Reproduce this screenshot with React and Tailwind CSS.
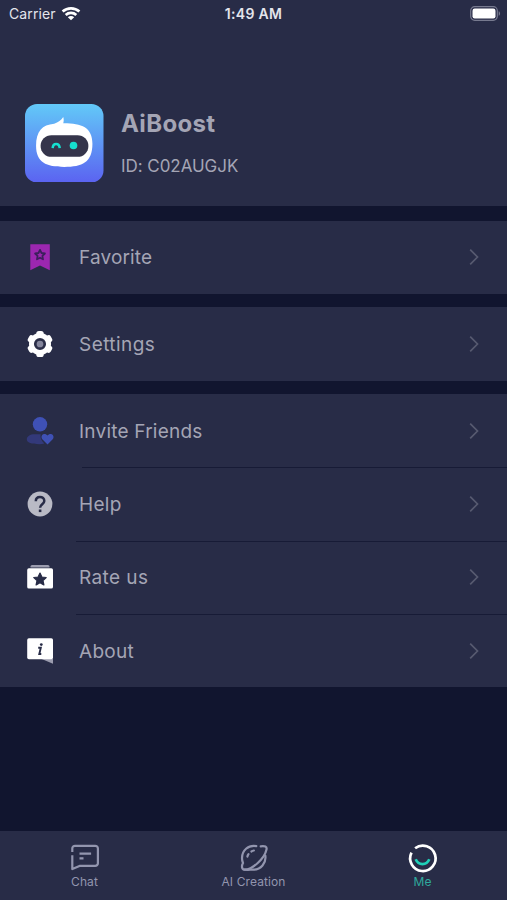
import React, { useState } from 'react';

const BookmarkIcon = () => (
    <svg viewBox="0 0 28 28" className="w-7 h-7">
        <path d="M4.3 1.2h19.5v26L14 22.6l-9.7 4.6z" fill="#9c27b0" />
        <path
            d="M14 6.9l1.5 3.1 3.4.5-2.5 2.4.6 3.4-3-1.6-3 1.6.6-3.4-2.500-2.400 3.400-.5z"
            fill="none"
            stroke="#3c1f5c"
            strokeWidth="1.8"
            strokeLinejoin="round"
        />
    </svg>
);

const GearIcon = () => (
    <svg viewBox="0 0 28 28" className="w-7 h-7">
        <g fill="#fff">
            <circle cx="14" cy="14" r="11" />
            {[0, 60, 120].map((angle) => (
                <rect key={angle} x="10.3" y="0.9" width="7.4" height="26.2" rx="2.6" transform={`rotate(${angle} 14 14)`} />
            ))}
        </g>
        <circle cx="14" cy="14" r="4.7" fill="#85869c" stroke="#2b2e48" strokeWidth="2.7" />
    </svg>
);

const InviteIcon = () => (
    <svg viewBox="0 0 28 28" className="w-7 h-7">
        <circle cx="14" cy="7.3" r="7.2" fill="#3f51b5" />
        <path d="M8.5 17.3h6.200c-.9 3.200.6 6.200 3.600 9.200-1.300.5-3 .7-5 .7C5.500 27.200.8 25.500.8 22.500c0-3.200 3.200-5.200 7.700-5.200z" fill="#33397a" />
        <path d="M21.500 27.500l-5.200-5.300c-1.600-1.900-.8-5.200 2-5.300 1.400 0 2.500.6 3.200 1.700.7-1.100 1.800-1.700 3.200-1.700 2.800.1 3.600 3.400 2 5.300z" fill="#3f51b5" />
    </svg>
);

const HelpIcon = () => (
    <svg viewBox="0 0 28 28" className="w-7 h-7">
        <circle cx="14" cy="14" r="12.4" fill="#b9bac5" />
        <path d="M9.800 11.200c0-2.700 1.800-4.300 4.200-4.300s4.300 1.600 4.300 4c0 3.300-4.200 3.400-4.200 6.800" fill="none" stroke="#282c47" strokeWidth="2.500" />
        <rect x="12.800" y="19.500" width="2.600" height="2.600" fill="#282c47" />
    </svg>
);

const RateIcon = () => (
    <svg viewBox="0 0 28 28" className="w-7 h-7">
        <path d="M4.500 4.500V3.500a1.500 1.500 0 0 1 1.500-1.500h16a1.500 1.500 0 0 1 1.500 1.500v1z" fill="#9c9daf" />
        <rect x="1.200" y="5.300" width="25.800" height="20.300" rx="1.700" fill="#fff" />
        <path
            d="M14 10l1.900 4 4.300.5-3.200 3 .9 4.400-3.900-2.200-3.900 2.200.9-4.400-3.200-3 4.300-.5z"
            fill="#282c47"
            stroke="#282c47"
            strokeWidth="1.200"
            strokeLinejoin="round"
        />
    </svg>
);

const AboutIcon = () => (
    <svg viewBox="0 0 28 28" className="w-7 h-7">
        <path d="M14.500 21.500H27v5.300z" fill="#9c9daf" />
        <rect x="1.200" y="1.300" width="25.800" height="21" rx="1.700" fill="#fff" />
        <circle cx="15.300" cy="7.600" r="1.400" fill="#282c47" />
        <path d="M12.200 10.800h2.600l-1.500 6.200h2" fill="none" stroke="#282c47" strokeWidth="1.900" />
    </svg>
);

const ChevronIcon = () => (
    <svg viewBox="0 0 10 18" className="w-2.5 h-[18px]" fill="none" stroke="#575a70" strokeWidth="1.700">
        <path d="M1.200 1.700L8.500 9l-7.300 7.300" />
    </svg>
);

const ChatIcon = () => (
    <svg viewBox="0 0 30 28" className="w-[30px] h-7" fill="none" stroke="#9295ae" strokeWidth="2.200">
        <path d="M2.300 8V4.500a2.700 2.700 0 0 1 2.700-2.700h20.200a2.700 2.700 0 0 1 2.700 2.700v14.700a2.700 2.700 0 0 1-2.700 2.700H9.500l-7.200 3.200V11.200" strokeLinejoin="round" />
        <path d="M9.500 9.600h11.600M9.500 14.400h4" />
    </svg>
);

const PlanetIcon = () => (
    <svg viewBox="0 0 30 28" className="w-[30px] h-7" fill="none" stroke="#9295ae" strokeWidth="2.200" strokeLinecap="round">
        <path d="M17.300 2.100C9 .8 3 6.500 3 14c0 2 .3 3.600 1 5-1.600 3-1.500 6.700 1.800 6.700 7 0 19.600-10.500 21.700-20.200.7-3-1.500-3.700-5.800-3.200" />
        <path d="M26.300 11.500c1.200 7.500-4.500 14.200-12.300 14.200-2.500 0-5 .2-8.200 0" />
        <path d="M8.400 12.600c.2-.9.6-1.700 1.100-2.400M12.400 7.500c.8-.5 1.600-.8 2.500-1" />
    </svg>
);

const MeIcon = () => (
    <svg viewBox="0 0 30 28" className="w-[30px] h-7 overflow-visible" fill="none">
        <path d="M7.100 4.300A12.700 12.700 0 1 1 3.500 8.700" stroke="#fff" strokeWidth="2.700" />
        <path d="M7.700 15.300c2.700 6.300 10.900 6.300 13.600 0" stroke="#1fd0b8" strokeWidth="2.700" />
    </svg>
);

const RobotLogo = () => (
    <svg viewBox="0 0 78 78" className="w-[78.5px] h-[78.5px]">
        <defs>
            <linearGradient id="logoSky" x1="0" y1="0" x2="0" y2="1">
                <stop offset="0" stopColor="#62c9f8" />
                <stop offset="1" stopColor="#5b63f1" />
            </linearGradient>
        </defs>
        <rect width="78" height="78" rx="12" fill="url(#logoSky)" />
        <path d="M29 19.500c4-1 7-3.300 9-6.500.7 2.200.6 4.400 0 6.100C56 19 67 23 67 39.500 67 58 57 62.500 39 62.500S11 58 11 41.500C11 27 17 20.500 29 19.500z" fill="#fff" />
        <rect x="15.500" y="31" width="47.500" height="21.500" rx="10.750" fill="#35354b" />
        <path d="M27.500 43.800c.3-5.500 6.500-5.500 7 0" fill="none" stroke="#16e0cf" strokeWidth="2.500" />
        <circle cx="48.200" cy="41.200" r="3.800" fill="#16e0cf" />
    </svg>
);

const WifiIcon = () => (
    <svg viewBox="0 0 20 15" className="w-5 h-[15px]" fill="none" stroke="#fff" strokeWidth="2.700">
        <path d="M1.600 5.500c4.700-4.300 12.100-4.300 16.800 0" />
        <path d="M4.700 9c3-2.800 7.600-2.800 10.600 0" />
        <path d="M10 14.300L6.800 11.200c1.800-1.600 4.600-1.600 6.400 0z" fill="#fff" stroke="none" />
    </svg>
);

const BatteryIcon = () => (
    <svg viewBox="0 0 31 15" className="w-[31px] h-[15px]">
        <rect x="0.700" y="0.700" width="26.600" height="13.600" rx="4" fill="none" stroke="#777a8f" strokeWidth="1.200" />
        <rect x="2.500" y="2.500" width="23" height="10" rx="2.200" fill="#fff" />
        <path d="M28.700 5.200c1.800.7 1.800 3.900 0 4.600z" fill="#777a8f" />
    </svg>
);

const sections = [
    [{ label: 'Favorite', icon: BookmarkIcon, tracking: 'tracking-[0.15px]' }],
    [{ label: 'Settings', icon: GearIcon, tracking: 'tracking-[0.45px]' }],
    [
        { label: 'Invite Friends', icon: InviteIcon, tracking: 'tracking-[0.22px]', divider: 'ml-[82px]' },
        { label: 'Help', icon: HelpIcon, tracking: 'tracking-[0.3px]', divider: 'ml-[76px]' },
        { label: 'Rate us', icon: RateIcon, tracking: 'tracking-[0.4px]', divider: 'ml-[76px]' },
        { label: 'About', icon: AboutIcon, tracking: 'tracking-[0.3px]' },
    ],
];

const tabs = [
    { label: 'Chat', icon: ChatIcon },
    { label: 'AI Creation', icon: PlanetIcon },
    { label: 'Me', icon: MeIcon },
];

const MenuRow = ({ label, icon: Icon, tracking, divider }) => (
    <button className="w-full h-[73.3px] flex flex-col text-left">
        <span className="w-full flex-1 flex items-center pl-[26px] pr-7">
            <Icon />
            <span className={`ml-[25px] pt-[2px] flex-1 text-[19px] leading-6 ${tracking}`}>{label}</span>
            <ChevronIcon />
        </span>
        {divider && <span className={`self-stretch h-px -mb-px bg-[#171b36] ${divider}`} />}
    </button>
);

const App = () => {
    const [activeTab, setActiveTab] = useState('Me');

    return (
        <div className="w-[507px] h-[900px] flex flex-col overflow-hidden bg-[#11152f] text-[#a4a5b5] font-['Inter',sans-serif]">
            {/* Status bar and profile */}
            <header className="h-[206px] shrink-0 bg-[#282c47]">
                <div className="h-[27px] grid grid-cols-3 items-center pl-[9px] pr-[6px] text-[14px] text-[#e4e5ec]">
                    <div className="flex items-center gap-[5px]">
                        <span className="tracking-[0.1px]">Carrier</span>
                        <WifiIcon />
                    </div>
                    <span className="-ml-[3px] text-center font-semibold tracking-[0.3px]">1:49 AM</span>
                    <div className="flex justify-end">
                        <BatteryIcon />
                    </div>
                </div>
                <div className="flex pt-[76.5px] pl-[25px]">
                    <RobotLogo />
                    <div className="ml-[17.5px] pt-[4.5px]">
                        <h1 className="text-[24px] leading-8 font-bold tracking-[0.35px]">AiBoost</h1>
                        <p className="mt-[14px] text-[17px] leading-6 tracking-[-0.05px]">ID: C02AUGJK</p>
                    </div>
                </div>
            </header>

            {/* Menu */}
            <main className="flex-1 pt-[14.5px] flex flex-col gap-[13.5px]">
                {sections.map((rows) => (
                    <section key={rows[0].label} className="bg-[#282c47]">
                        {rows.map((row) => (
                            <MenuRow key={row.label} {...row} />
                        ))}
                    </section>
                ))}
            </main>

            {/* Tab bar */}
            <nav className="h-[69px] shrink-0 grid grid-cols-3 bg-[#282c47]">
                {tabs.map(({ label, icon: Icon }) => (
                    <button
                        key={label}
                        onClick={() => setActiveTab(label)}
                        className={`flex flex-col items-center pt-[13px] ${activeTab === label ? 'text-[#2fa99d]' : 'text-[#9295ae]'}`}
                    >
                        <Icon />
                        <span className="mt-px text-[12px] leading-[18px] tracking-[0.1px]">{label}</span>
                    </button>
                ))}
            </nav>
        </div>
    );
};

export default App;
